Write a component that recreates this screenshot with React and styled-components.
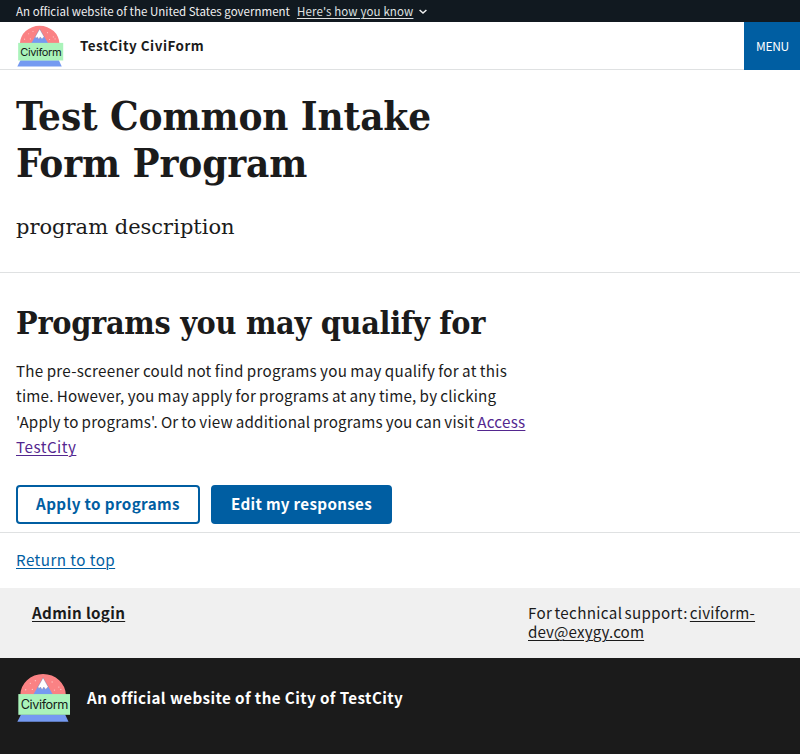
import React from 'react';
import styled, { createGlobalStyle, css } from 'styled-components';

const GlobalStyle = createGlobalStyle`
  *, *::before, *::after { box-sizing: border-box; }
  body {
    margin: 0;
    background: #fff;
    color: #1b1b1b;
    font-family: "Noto Sans CJK SC", "Noto Sans", sans-serif;
    font-size: 15.2px;
    line-height: 25.4px;
    overflow: hidden;
  }
`;

const serif = css`
  font-family: "DejaVu Serif Condensed", "DejaVu Serif", serif;
  font-stretch: condensed;
`;

const Banner = styled.div`
  display: flex;
  align-items: center;
  height: 22px;
  padding: 0 16px;
  gap: 7px;
  background: #111920;
  color: #f0f0f0;
  font-size: 11.5px;
  line-height: 22px;
  white-space: nowrap;
`;

const BannerText = styled.span`
  letter-spacing: 0.02px;
`;

const BannerButton = styled.a`
  display: flex;
  align-items: center;
  gap: 5px;
  color: #dfe1e2;
  cursor: pointer;
`;

const Underlined = styled.span`
  text-decoration: underline;
  text-underline-offset: 2px;
  text-decoration-thickness: 1px;
  letter-spacing: 0.13px;
`;

const Header = styled.header`
  display: flex;
  align-items: stretch;
  height: 48px;
  padding-left: 17px;
  box-shadow: inset 0 -1px 0 #dfe1e2;
`;

const Brand = styled.div`
  flex: 1;
  display: flex;
  align-items: center;
  gap: 16.5px;
  font-size: 13.4px;
  font-weight: 700;
  letter-spacing: 0.51px;
`;

const MenuButton = styled.button`
  width: 56px;
  border: 0;
  padding: 0 0 0 1px;
  background: #005ea2;
  color: #fff;
  font: inherit;
  font-size: 12px;
  letter-spacing: -0.3px;
`;

const Intro = styled.section`
  height: 203px;
  padding: 22px 16px 0;
  border-bottom: 1px solid #dfe1e2;
`;

const Title = styled.h1`
  ${serif}
  margin: 0;
  font-size: 40px;
  line-height: 47px;
  font-weight: 700;
  letter-spacing: -0.1px;
  white-space: nowrap;
`;

const Lead = styled.p`
  margin: 23px 0 0;
  font-family: "DejaVu Serif", serif;
  font-size: 21px;
  line-height: 36px;
`;

const Results = styled.section`
  height: 260px;
  padding: 30px 16px 0;
  border-bottom: 1px solid #dfe1e2;
`;

const SectionTitle = styled.h2`
  ${serif}
  margin: 0;
  font-size: 32px;
  line-height: 41px;
  font-weight: 700;
  letter-spacing: -0.28px;
  white-space: nowrap;
`;

const Paragraph = styled.p`
  margin: 14px 0 0;
  white-space: nowrap;
`;

const Line = styled.span`
  display: block;
  letter-spacing: ${(p) => p.$spacing || '0'};
  word-spacing: ${(p) => p.$words || '0'};
`;

const Link = styled.a`
  color: ${(p) => p.$color || 'inherit'};
  text-decoration: underline;
  text-decoration-thickness: 1px;
  text-underline-offset: 2px;
  letter-spacing: ${(p) => p.$spacing || 'inherit'};
`;

const Actions = styled.div`
  display: flex;
  gap: 11px;
  margin-top: 25px;
`;

const Button = styled.button`
  width: ${(p) => p.$width};
  height: 39px;
  padding: 0 0 2px;
  border: 2px solid #005ea2;
  border-radius: 4px;
  background: ${(p) => (p.$filled ? '#005ea2' : '#fff')};
  color: ${(p) => (p.$filled ? '#fff' : '#005ea2')};
  font: inherit;
  font-weight: 700;
  line-height: 1;
  letter-spacing: ${(p) => (p.$filled ? '0.3px' : '0.38px')};
`;

const ReturnBar = styled.div`
  height: 55px;
  padding: 14px 16px 0;
`;

const SupportBar = styled.div`
  display: grid;
  grid-template-columns: 496px 1fr;
  height: 70px;
  padding: 15px 32px 0;
  background: #f0f0f0;
  line-height: 19px;
  white-space: nowrap;
`;

const AdminLink = styled(Link)`
  font-weight: 700;
`;

const Identifier = styled.footer`
  display: flex;
  align-items: flex-start;
  gap: 17px;
  height: 96px;
  padding: 15px 16px 0 16.5px;
  background: #1b1b1b;
  color: #fff;
  font-weight: 700;
`;

const IdentifierText = styled.span`
  margin-top: 12px;
  letter-spacing: 0.4px;
`;

const LogoSvg = styled.svg`
  flex: none;
  display: block;
`;

const flakes = [[26, 50], [40, 31], [55, 23], [46, 49], [105, 27], [125, 42], [112, 51], [131, 49]];

function Logo({ width, height }) {
  return (
    <LogoSvg width={width} height={height} viewBox="0 0 160 148" preserveAspectRatio="none" aria-label="Civiform">
      <path d="M10 66A68 63 0 0 1 146 66Z" fill="#fa8284" />
      {flakes.map(([x, y]) => <circle key={`${x}-${y}`} cx={x} cy={y} r="2" fill="#ffc5c5" />)}
      <path d="M48 66L78 14L108 66Z" fill="#759af1" />
      <path d="M78 14L63 41L65 47L70 42L75 50L80 42L86 49L93 41Z" fill="#fff" stroke="#8b6b78" strokeWidth="1" />
      <path d="M12 124H144L154 146H1Z" fill="#759af1" />
      <rect x="4" y="63" width="155" height="62" fill="#aaf3ba" />
      <text x="11" y="109" fontFamily="Inter, sans-serif" fontSize="38" fontWeight="400" letterSpacing="0" textLength="143" fill="#142018">Civiform</text>
    </LogoSvg>
  );
}

function Chevron() {
  return (
    <svg width="10" height="8" viewBox="0 0 10 8" fill="none">
      <path d="M1.6 3L5 6.1L8.4 3" stroke="#f0f0f0" strokeWidth="1.5" />
    </svg>
  );
}

export default function App() {
  return (
    <>
      <GlobalStyle />
      <Banner>
        <BannerText>An official website of the United States government</BannerText>
        <BannerButton>
          <Underlined>Here's how you know</Underlined>
          <Chevron />
        </BannerButton>
      </Banner>
      <Header>
        <Brand>
          <Logo width={46.5} height={42} />
          <span>TestCity CiviForm</span>
        </Brand>
        <MenuButton>MENU</MenuButton>
      </Header>
      <main>
        <Intro>
          <Title>Test Common Intake<br />Form Program</Title>
          <Lead>program description</Lead>
        </Intro>
        <Results>
          <SectionTitle>Programs you may qualify for</SectionTitle>
          <Paragraph>
            <Line $spacing="0.26px" $words="-0.5px">The pre-screener could not find programs you may qualify for at this</Line>
            <Line $spacing="0.2px" $words="-0.5px">time. However, you may apply for programs at any time, by clicking</Line>
            <Line $spacing="0.17px" $words="-0.6px">'Apply to programs'. Or to view additional programs you can visit <Link $color="#54278f" $spacing="0.25px">Access</Link></Line>
            <Line $spacing="0.5px"><Link $color="#54278f">TestCity</Link></Line>
          </Paragraph>
          <Actions>
            <Button $width="184px">Apply to programs</Button>
            <Button $width="181px" $filled>Edit my responses</Button>
          </Actions>
        </Results>
        <ReturnBar><Link $color="#005ea2" $spacing="0.44px">Return to top</Link></ReturnBar>
      </main>
      <SupportBar>
        <div><AdminLink $spacing="0.32px">Admin login</AdminLink></div>
        <div>
          <Line $spacing="0.36px" $words="-1.7px">For technical support: <Link $spacing="0.22px">civiform-</Link></Line>
          <Line $spacing="0.1px"><Link>dev@exygy.com</Link></Line>
        </div>
      </SupportBar>
      <Identifier>
        <Logo width={53.5} height={49.5} />
        <IdentifierText>An official website of the City of TestCity</IdentifierText>
      </Identifier>
    </>
  );
}
